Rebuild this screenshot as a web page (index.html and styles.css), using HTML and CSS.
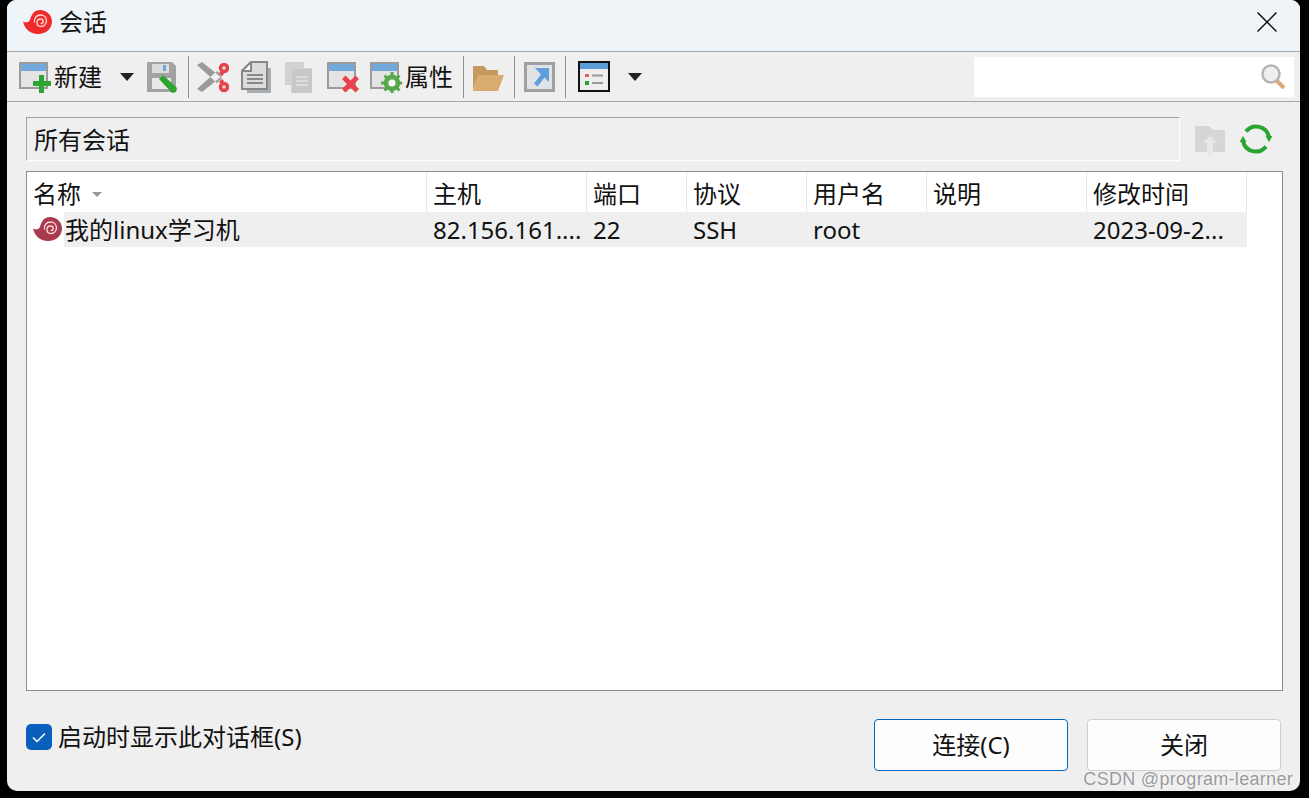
FILE: index.html
```html
<!DOCTYPE html>
<html lang="zh-CN">
<head>
  <meta charset="UTF-8">
  <title>会话</title>
  <link rel="stylesheet" href="styles.css">
</head>
<body>
  <svg class="defs" width="0" height="0">
    <symbol id="snail" viewBox="0 0 29 24">
      <path d="M0 11.500C3 13 5.500 12.500 7 10 8.500 4 11.500 0 17 0c6.800 0 12 5.200 12 11.500C29 18.500 23 24 15 24 7 24 1.500 18.500 0 11.500z"/>
      <g fill="none" stroke="#ffd9d9" stroke-linecap="round">
        <path stroke-width="1.300" d="M11.500 12C11 8 13.500 5 17.500 5 21 5 23.500 7.500 23.500 10.800 23.500 14 21 16.500 18 16.500 15.500 16.500 14 14.800 14 12.500 14 10.500 15.500 9 17.500 9 19 9 20.200 10.200 20.200 11.500 20.200 12.800 19.200 13.500 18.200 13.500"/>
      </g>
    </symbol>
    <symbol id="win" viewBox="0 0 32 32">
      <rect x="1" y="2" width="27" height="25" fill="#e4e4e4" stroke="#9b9b9b" stroke-width="2"/>
      <rect x="2" y="3" width="25" height="7" fill="#73a9da"/>
    </symbol>
  </svg>

  <div class="window">
    <!-- title bar -->
    <div class="titlebar">
      <svg class="logo"><use href="#snail"/></svg>
      <span class="title">会话</span>
      <svg class="close" viewBox="0 0 20 20"><path d="M.5.5l19 19M19.500.5l-19 19" stroke="#111" stroke-width="1.500" fill="none"/></svg>
    </div>

    <!-- toolbar -->
    <div class="toolbar">
      <svg class="icon first" viewBox="0 0 32 32"><use href="#win" width="32" height="32"/><path d="M20 14h5v6h7v5h-7v7h-5v-7h-6v-5h6z" fill="#2ba52f"/></svg>
      <span class="label">新建</span>
      <span class="caret"></span>
      <svg class="icon save" viewBox="0 0 32 32">
        <path d="M1 1h25l4 4v26H1z" fill="#a2a2a2"/>
        <rect x="6" y="3" width="17" height="9" fill="#dcdcdc"/>
        <rect x="17" y="4" width="3" height="6" fill="#6fa5d8"/>
        <rect x="6" y="17" width="19" height="11" fill="#e8e8e8"/>
        <path d="M13 18l4-4 14 13-1 4-4 1z" fill="#2ba52f"/>
      </svg>
      <span class="sep"></span>
      <svg class="icon" viewBox="0 0 32 32">
        <path d="M0 4l5-3 20 16-5 5zM0 28l5 3 20-16-5-5z" fill="#9a9a9a"/>
        <circle cx="27" cy="7" r="3.500" fill="#ddd" stroke="#e8434c" stroke-width="3.500"/>
        <circle cx="27" cy="26" r="3.500" fill="#ddd" stroke="#e8434c" stroke-width="3.500"/>
        <path d="M23 11l3 3M23 22l3-3" stroke="#e8434c" stroke-width="3"/>
      </svg>
      <svg class="icon" viewBox="0 0 32 32">
        <path d="M6 7h24v25H6z" fill="#a8adb2"/>
        <path d="M10 1h16v27H1V10z" fill="#dcdcdc" stroke="#888" stroke-width="2"/>
        <path d="M10 1v9H1z" fill="#fff" stroke="#888" stroke-width="2"/>
        <path d="M6 14h16M6 18h16M6 22h16" stroke="#888" stroke-width="2"/>
      </svg>
      <svg class="icon" viewBox="0 0 32 32">
        <path d="M1 1h19v6h8v25H7v-8H1z" fill="#d2d2d2"/>
        <path d="M8 8h20v24H8z" fill="#c8c8c8"/>
        <path d="M12 16h12M12 20h12M12 24h12" stroke="#dcdcdc" stroke-width="2"/>
      </svg>
      <svg class="icon" viewBox="0 0 32 32"><use href="#win" width="32" height="32"/><path d="M15 18l3.500-3.500 5 5 5-5L32 18l-5 5 5 5-3.500 3.500-5-5-5 5L15 28l5-5z" fill="#e8434c"/></svg>
      <svg class="icon" viewBox="0 0 32 32"><use href="#win" width="32" height="32"/>
        <path d="M22 11v22M11 22h22M14.500 14.500l15 15M29.500 14.500l-15 15" stroke="#55a84a" stroke-width="3"/>
        <circle cx="22" cy="22" r="6.500" fill="none" stroke="#55a84a" stroke-width="3.500"/>
        <circle cx="22" cy="22" r="3.500" fill="#fff"/>
      </svg>
      <span class="label">属性</span>
      <span class="sep"></span>
      <svg class="icon" viewBox="0 0 32 32">
        <path d="M1 5h11l3 4h11v5H7L1 29z" fill="#c49a60"/>
        <path d="M1 30l6-16h25l-6 16z" fill="#d9ab6e"/>
      </svg>
      <span class="sep"></span>
      <svg class="icon" viewBox="0 0 32 32">
        <rect x="2.500" y="2.500" width="28" height="27" fill="#dfe3e6" stroke="#a0a0a0" stroke-width="3"/>
        <path d="M12 7h14v14l-4.500-4.500-7 9-3.500-3 7-9z" fill="#5f9fdd"/>
      </svg>
      <span class="sep"></span>
      <svg class="icon board" viewBox="0 0 32 32">
        <rect x="1" y="1" width="30" height="29" fill="#eee" stroke="#111" stroke-width="2"/>
        <rect x="2" y="2" width="28" height="6" fill="#5b9bd8"/>
        <rect x="7" y="13" width="4" height="3" fill="#e8606a"/>
        <rect x="7" y="20" width="4" height="4" fill="#22a83a"/>
        <path d="M14 14.500h11M14 22h11" stroke="#999" stroke-width="2"/>
      </svg>
      <span class="caret"></span>
      <div class="search">
        <svg class="lens" viewBox="0 0 25 25">
          <path d="M16 17l7 7" stroke="#dba876" stroke-width="4"/>
          <circle cx="10" cy="10" r="8.500" fill="#eef0f0" stroke="#b5b5b5" stroke-width="2.500"/>
        </svg>
      </div>
    </div>

    <div class="content">
      <div class="pathrow">
        <div class="pathbox">所有会话</div>
        <svg class="icon" viewBox="0 0 32 32">
          <path d="M1 3h14l4 4h12v22H1z" fill="#d6d6d6"/>
          <path d="M16 13l7 7h-4v12h-6V20H9z" fill="#e8e8e8"/>
        </svg>
        <svg class="icon" viewBox="0 0 32 32">
          <g fill="none" stroke="#2aa52f" stroke-width="4">
            <path d="M6 8.500A13 13 0 0 1 29 14"/>
            <path d="M26 23.500A13 13 0 0 1 3 18"/>
          </g>
          <path d="M25.500 13h7L29 19zM-0.500 19h7L3 13z" fill="#2aa52f"/>
        </svg>
      </div>

      <div class="list">
        <div class="cols head">
          <div class="cell">名称<span class="sort"></span></div>
          <div class="cell">主机</div>
          <div class="cell">端口</div>
          <div class="cell">协议</div>
          <div class="cell">用户名</div>
          <div class="cell">说明</div>
          <div class="cell">修改时间</div>
        </div>
        <div class="cols row">
          <div class="cell namecell">
            <svg class="rowlogo"><use href="#snail"/></svg>
            <span class="rowname">我的linux学习机</span>
          </div>
          <div class="cell">82.156.161....</div>
          <div class="cell">22</div>
          <div class="cell">SSH</div>
          <div class="cell">root</div>
          <div class="cell"></div>
          <div class="cell">2023-09-2...</div>
        </div>
      </div>

      <div class="footer">
        <label class="startup">
          <span class="check">
            <svg viewBox="0 0 26 26"><path d="M7 13.500l4 4 8-8" fill="none" stroke="#fff" stroke-width="1.500"/></svg>
          </span>
          启动时显示此对话框(S)
        </label>
        <button class="btn primary">连接(C)</button>
        <button class="btn">关闭</button>
      </div>
    </div>
    <div class="watermark">CSDN @program-learner</div>
  </div>
</body>
</html>
```

FILE: styles.css
```css
/* base */
* { margin:0; padding:0; box-sizing:border-box; }
html, body { height:100%; overflow:hidden; }
body {
  background:#000;
  font-family:"Noto Sans","Noto Sans CJK SC",sans-serif;
  font-size:24px;
  color:#111;
}
.defs { position:absolute; }

/* window */
.window {
  position:relative;
  width:1293px; height:791px;
  margin-left:7px;
  background:#efefef;
  border-radius:9px 9px 10px 10px;
  overflow:hidden;
  display:flex; flex-direction:column;
}

/* title bar */
.titlebar {
  height:52px; flex:none;
  display:flex; align-items:center;
  padding:0 23px 0 16px;
  background:#eff4f8;
  border-bottom:1px solid #a6a6a6;
}
.logo { width:29px; height:24px; fill:#ee2b2b; margin-top:-7px; }
.title { margin-left:7px; line-height:1; margin-top:-8px; }
.close { width:20px; height:20px; margin-left:auto; margin-top:-7px; }

/* toolbar */
.toolbar {
  height:50px; flex:none;
  display:flex; align-items:center;
  padding:0 6px 0 12px;
  border-bottom:1px solid #a6a6a6;
}
.icon { width:32px; height:32px; flex:none; margin-left:11px; }
.icon.first { margin-left:0; }
.icon.save { margin-left:12px; }
.sep { width:1px; height:42px; background:#8f8f8f; margin-left:10px; flex:none; }
.sep + .icon { margin-left:8px; }
.sep + .icon + .icon { margin-left:12px; }
.sep + .icon.board { margin-left:12px; }
.label { margin-left:3px; line-height:1; }
.caret {
  width:0; height:0; margin-left:18px;
  border-left:7px solid transparent;
  border-right:7px solid transparent;
  border-top:8px solid #222;
}
.search {
  width:320px; height:40px;
  margin-left:auto;
  background:#fff;
  display:flex; align-items:center; justify-content:flex-end;
  padding-right:8px;
}
.lens { width:25px; height:25px; }

/* session area */
.content {
  flex:1; min-height:0;
  display:flex; flex-direction:column;
  padding:15px 17px 0 19px;
}
.pathrow { display:flex; align-items:center; flex:none; }
.pathrow .icon { margin-left:14px; }
.pathbox {
  width:1154px; height:44px;
  padding-left:7px;
  line-height:44px;
  border:1px solid;
  border-color:#a0a0a0 #fff #fff #a0a0a0;
}

/* list */
.list {
  flex:1; min-height:0;
  margin-top:10px;
  background:#fff;
  border:1px solid #8b8b9b;
}
.cols {
  display:grid;
  grid-template-columns:400px 160px 100px 120px 120px 160px 160px;
  width:1220px;
}
.head { height:40px; }
.head .cell { border-right:1px solid #e6e6e6; line-height:44px; }
.row { height:35px; background:linear-gradient(#efefef,#efefef) no-repeat 37px 0; }
.cell { padding-left:6px; white-space:nowrap; overflow:hidden; line-height:35px; }
.sort {
  display:inline-block; vertical-align:middle;
  width:0; height:0; margin:-4px 0 0 11px;
  border-left:5px solid transparent;
  border-right:5px solid transparent;
  border-top:5px solid #999;
}
.namecell { display:flex; align-items:center; }
.rowlogo { width:29px; height:24px; fill:#a83c4e; margin-top:-2px; flex:none; }
.rowname { margin-left:3px; }

/* bottom */
.footer {
  height:100px; flex:none;
  display:flex; align-items:flex-start;
  padding:28px 2px 0 0;
}
.startup {
  display:flex; align-items:center;
  margin-right:auto;
  line-height:36px;
}
.check {
  width:26px; height:26px;
  margin-right:6px;
  background:#0a5fbd;
  border-radius:5px;
}
.check svg { display:block; width:26px; height:26px; }
.btn {
  width:194px; height:52px;
  margin-left:19px;
  padding-bottom:4px;
  background:#fdfdfd;
  border:1px solid #d0d0d0;
  border-radius:4px;
  font:inherit; color:inherit;
}
.btn.primary { border-color:#0067c0; }

.watermark {
  position:absolute; right:7px; bottom:1px;
  font-family:"Liberation Sans",sans-serif;
  font-size:18px;
  letter-spacing:.3px;
  color:rgba(120,120,120,.75);
  text-shadow:0 0 2px #fff;
}
```
